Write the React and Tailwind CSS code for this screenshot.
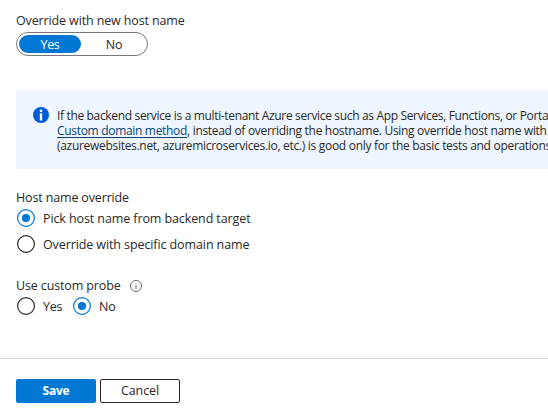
function Radio({ checked, label, className = "" }) {
  return (
    <label className={`flex h-[18px] items-center ${className}`}>
      <svg className="h-[18px] w-[18px] shrink-0" viewBox="0 0 18 18" fill="none">
        <circle cx="9" cy="9" r="8.4" stroke={checked ? "#0078d4" : "#292827"} strokeWidth="1.2" />
        {checked && <circle cx="9" cy="9" r="4.1" fill="#0078d4" />}
      </svg>
      <span className="ml-2 pt-0.5 whitespace-nowrap">{label}</span>
    </label>
  );
}

export default function App() {
  return (
    <div className="flex h-[419px] w-[548px] flex-col overflow-hidden bg-white font-['Open_Sans','Noto_Sans',sans-serif] text-[12.5px] leading-[18px] tracking-[-0.1px] text-[#292827]">
      <div className="mt-3 ml-4 h-[18px] tracking-[-0.13px] whitespace-nowrap">Override with new host name</div>
      <div className="mt-[2px] ml-4 flex h-6 w-[132px] items-center rounded-full border border-[#7a7876] px-0.5">
        <span className="flex h-[18px] w-[62px] items-center justify-center rounded-full bg-[#0078d4] pt-0.5 tracking-[-0.3px] text-white">
          Yes
        </span>
        <span className="flex h-[18px] flex-1 items-center justify-center pt-0.5 pl-0.5">No</span>
      </div>

      <div className="mt-[34px] ml-4 flex h-[79px] rounded-l-[2px] bg-[#f0f6ff]">
        <svg className="mt-[17px] ml-[17px] h-4 w-4 shrink-0" viewBox="0 0 16 16">
          <circle cx="8" cy="8" r="8" fill="#015cda" />
          <circle cx="8" cy="3.8" r="1.4" fill="#fff" />
          <rect x="6.8" y="6.2" width="2.4" height="7.3" rx="0.5" fill="#fff" />
        </svg>
        <div className="mt-[18px] ml-2 text-[12px] leading-[15px] tracking-[-0.34px] whitespace-nowrap">
          <p>If the backend service is a multi-tenant Azure service such as App Services, Functions, or Portal</p>
          <p className="tracking-[-0.31px]">
            <a className="text-[#004578] underline underline-offset-2">Custom domain method</a>, instead of overriding
            the hostname. Using override host name with
          </p>
          <p className="tracking-[-0.3px]">
            (azurewebsites.net, azuremicroservices.io, etc.) is good only for the basic tests and operations.
          </p>
        </div>
      </div>

      <div className="mt-5 ml-4 h-[18px] tracking-[-0.15px] whitespace-nowrap">Host name override</div>
      <Radio checked label="Pick host name from backend target" className="mt-[2px] ml-[17px]" />
      <Radio label="Override with specific domain name" className="mt-2 ml-[17px]" />

      <div className="mt-6 ml-4 flex h-[18px] items-center">
        <span className="tracking-[-0.13px] whitespace-nowrap">Use custom probe</span>
        <svg className="ml-[9px] h-3 w-3" viewBox="0 0 12 12" fill="none">
          <circle cx="6" cy="6" r="5.5" stroke="#72706e" />
          <rect x="5.5" y="3" width="1" height="1" fill="#72706e" />
          <rect x="5.5" y="5" width="1" height="4" fill="#72706e" />
        </svg>
      </div>
      <div className="mt-[2px] ml-[17px] flex tracking-[-0.3px]">
        <Radio label="Yes" />
        <Radio checked label="No" className="ml-[11px]" />
      </div>

      <div className="mt-[43px] h-px bg-[#d8d7d6]" />
      <div className="mt-5 ml-4 flex gap-1">
        <button className="h-6 w-20 rounded-[2px] bg-[#0078d4] text-[12px] font-bold tracking-[-0.2px] text-white">Save</button>
        <button className="h-6 w-20 rounded-[2px] border border-[#292827] bg-white">Cancel</button>
      </div>
    </div>
  );
}
